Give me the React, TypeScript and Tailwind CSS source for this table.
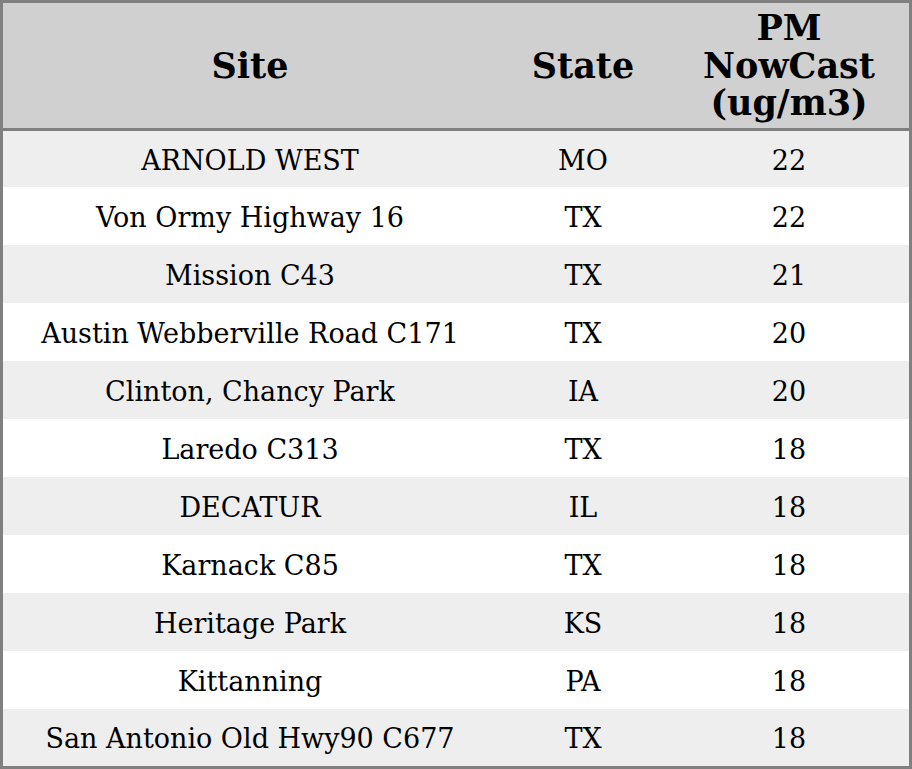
export default function App() {
  const rows: [string, string, string][] = [
    ["ARNOLD WEST", "MO", "22"],
    ["Von Ormy Highway 16", "TX", "22"],
    ["Mission C43", "TX", "21"],
    ["Austin Webberville Road C171", "TX", "20"],
    ["Clinton, Chancy Park", "IA", "20"],
    ["Laredo C313", "TX", "18"],
    ["DECATUR", "IL", "18"],
    ["Karnack C85", "TX", "18"],
    ["Heritage Park", "KS", "18"],
    ["Kittanning", "PA", "18"],
    ["San Antonio Old Hwy90 C677", "TX", "18"],
  ];
  return (
    <div
      className="w-[912px] h-[769px] border-[3px] border-[#808080] flex flex-col bg-white text-black"
      style={{ fontFamily: '"DejaVu Serif", serif' }}
    >
      <div className="h-[128px] shrink-0 bg-[#d0d0d0] border-b-[3px] border-[#808080] flex items-center text-[35px] font-bold leading-[37.5px]">
        <div className="w-[494px] text-center">Site</div>
        <div className="w-[172px] text-center">State</div>
        <div className="flex-1 text-center">
          PM
          <br />
          NowCast
          <br />
          (ug/m3)
        </div>
      </div>
      <div className="flex-1 flex flex-col text-[27px]">
        {rows.map((r, i) => (
          <div
            key={i}
            className={`flex items-center pt-[4px] ${i === 0 ? "h-[56px] shrink-0" : i === rows.length - 1 ? "flex-1" : "h-[58px] shrink-0"} ${i % 2 === 0 ? "bg-[#eeeeee]" : "bg-white"}`}
          >
            <div className="w-[494px] text-center">{r[0]}</div>
            <div className="w-[172px] text-center">{r[1]}</div>
            <div className="flex-1 text-center">{r[2]}</div>
          </div>
        ))}
      </div>
    </div>
  );
}
